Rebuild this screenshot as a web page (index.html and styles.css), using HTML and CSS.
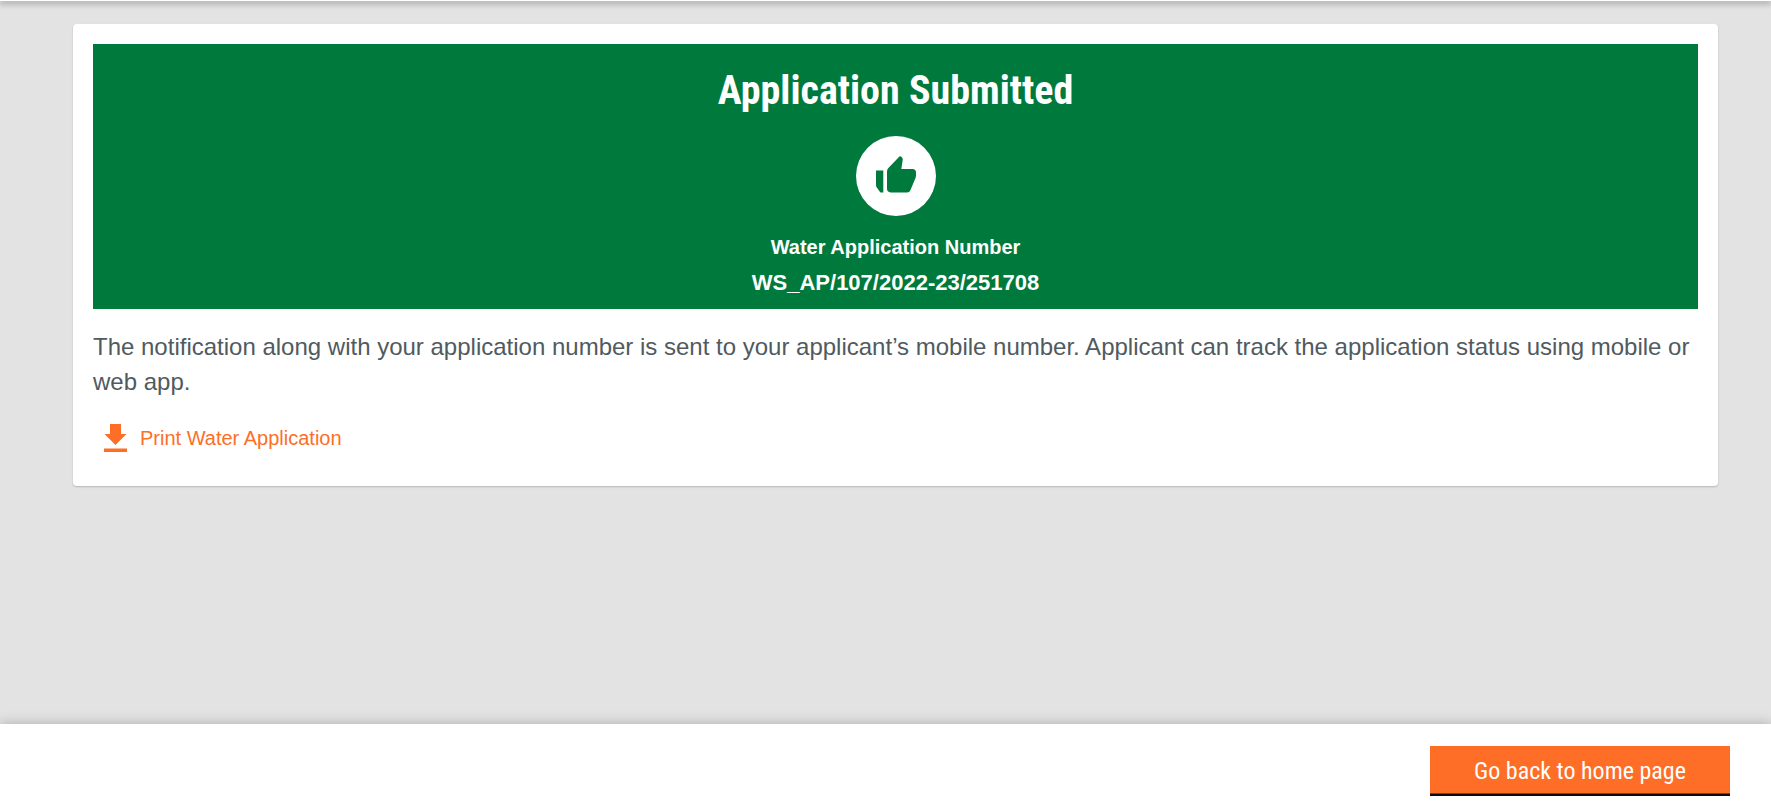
FILE: index.html
```html
<!DOCTYPE html>
<html lang="en">
<head>
<meta charset="utf-8">
<meta name="viewport" content="width=device-width, initial-scale=1">
<title>Application Submitted</title>
<link rel="stylesheet" href="styles.css">
</head>
<body>
<header class="topbar"></header>
<main class="content">
  <section class="card">
    <div class="banner">
      <h1 class="banner-title">Application Submitted</h1>
      <div class="badge">
        <svg class="badge-icon" viewBox="0 0 40 40" aria-hidden="true">
          <path d="M0 14.5H7.3V36.5H5.3Q4.6 36.5 4 36L.8 31.5Q0 30.200 0 29Z"/>
          <path d="M11 15.500Q11 13.300 12.400 12L22.700 1.200Q24.200-.6 25.800 1.200Q27 2.300 26.700 4L25.300 13H36.400Q40 13 40 16.600V19.600Q40 20.800 39.500 22L34.400 34.300Q33.400 36.500 31.200 36.500H14.600Q11 36 11 32.800Z"/>
        </svg>
      </div>
      <p class="banner-label">Water Application Number</p>
      <p class="banner-number">WS_AP/107/2022-23/251708</p>
    </div>
    <p class="message">The notification along with your application number is sent to your applicant’s mobile number. Applicant can track the application status using mobile or web app.</p>
    <a class="print-link" href="#">
      <svg class="print-icon" viewBox="0 0 23 28" aria-hidden="true">
        <path d="M6 0H17V10H22.500L11.500 21L.5 10H6ZM0 24.500H23V28H0Z"/>
      </svg>
      <span>Print Water Application</span>
    </a>
  </section>
</main>
<footer class="action-bar">
  <button class="home-button" type="button">Go back to home page</button>
</footer>
</body>
</html>
```
FILE: styles.css
```css
* {
  box-sizing: border-box;
}

body {
  margin: 0;
  min-height: 100vh;
  display: flex;
  flex-direction: column;
  background: #e3e3e3;
  color: #505a5f;
  font-family: "Liberation Sans", Arial, sans-serif;
}

h1,
p {
  margin: 0;
}

.topbar {
  height: 1px;
  background: #fff;
  box-shadow: 0 1px 6px 1px rgba(11, 12, 12, 0.45);
}

.content {
  flex: 1;
  padding: 23px 53px 24px 73px;
}

.card {
  padding: 20px 20px 30px;
  border-radius: 4px;
  background: #fff;
  box-shadow: 0 1px 2px rgba(0, 0, 0, 0.2);
}

.banner {
  display: flex;
  flex-direction: column;
  align-items: center;
  padding: 21px 16px 8px;
  background: #007a3c;
  color: #fff;
  text-align: center;
}

.banner-title {
  font: 700 40px/52px "Roboto Condensed", Roboto, sans-serif;
}

.badge {
  display: flex;
  align-items: center;
  justify-content: center;
  width: 80px;
  height: 80px;
  margin: 19px 0 16px;
  border-radius: 50%;
  background: #fff;
}

.badge-icon {
  width: 40px;
  height: 40px;
  fill: #007a3c;
}

.banner-label {
  font-size: 20px;
  font-weight: 700;
  line-height: 30px;
}

.banner-number {
  margin-top: 3px;
  font-size: 22px;
  font-weight: 700;
  line-height: 36px;
}

.message {
  margin-top: 20px;
  font-size: 24px;
  line-height: 35px;
}

.print-link {
  display: inline-flex;
  align-items: center;
  gap: 13px;
  margin: 25px 0 0 11px;
  color: #fe6e26;
  font-size: 20px;
  line-height: 28px;
  text-decoration: none;
}

.print-icon {
  width: 23px;
  height: 28px;
  fill: currentColor;
}

.action-bar {
  display: flex;
  justify-content: flex-end;
  padding: 22px 41px 10px 16px;
  background: #fff;
  box-shadow: 0 0 12px rgba(0, 0, 0, 0.25);
}

.home-button {
  width: 300px;
  height: 50px;
  padding: 0;
  border: 0;
  background: #fe6e26;
  box-shadow: inset 0 -2px #0b0c0c, inset 0 -3px #8a3d18;
  color: #fff;
  font: 400 24px/28px "Roboto Condensed", Roboto, sans-serif;
}
```
